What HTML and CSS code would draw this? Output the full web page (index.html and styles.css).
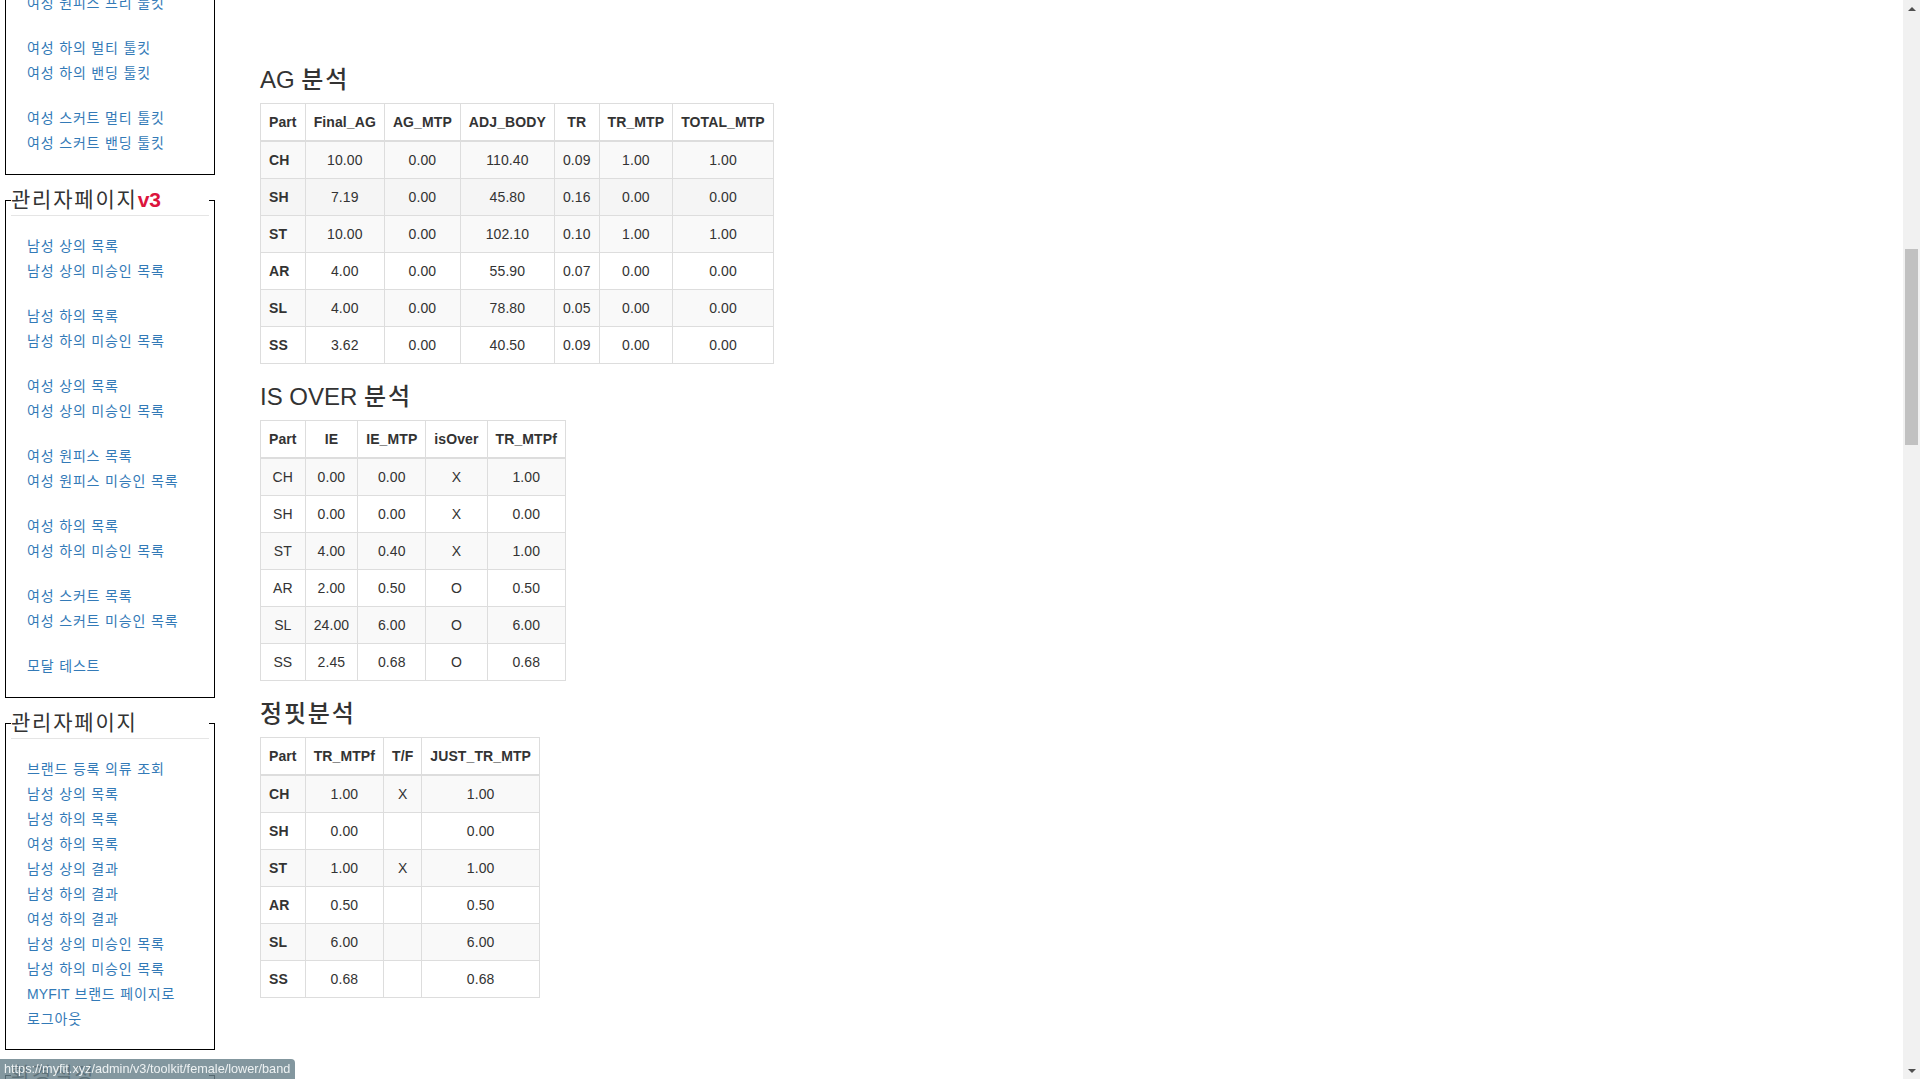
FILE: index.html
```html
<!DOCTYPE html>
<html lang="ko">
<head>
<meta charset="utf-8">
<title>MYFIT 관리자페이지</title>
<link rel="stylesheet" href="styles.css">
</head>
<body>
<div class="screen">
  <div class="viewport">
    <div class="layout">
      <aside class="sidebar">
        <fieldset class="menu menu-first">
          <legend>관리자페이지 툴킷</legend>
          <div class="group"><a href="#">남성 상의 툴킷</a></div>
          <div class="group"><a href="#">남성 하의 멀티 툴킷</a><a href="#">남성 하의 밴딩 툴킷</a></div>
          <div class="group"><a href="#">여성 상의 툴킷</a></div>
          <div class="group"><a href="#">여성 원피스 멀티 툴킷</a><a href="#">여성 원피스 프리 툴킷</a></div>
          <div class="group"><a href="#">여성 하의 멀티 툴킷</a><a href="#">여성 하의 밴딩 툴킷</a></div>
          <div class="group"><a href="#">여성 스커트 멀티 툴킷</a><a href="#">여성 스커트 밴딩 툴킷</a></div>
        </fieldset>
        <fieldset class="menu">
          <legend>관리자페이지<span class="ver">v3</span></legend>
          <div class="group"><a href="#">남성 상의 목록</a><a href="#">남성 상의 미승인 목록</a></div>
          <div class="group"><a href="#">남성 하의 목록</a><a href="#">남성 하의 미승인 목록</a></div>
          <div class="group"><a href="#">여성 상의 목록</a><a href="#">여성 상의 미승인 목록</a></div>
          <div class="group"><a href="#">여성 원피스 목록</a><a href="#">여성 원피스 미승인 목록</a></div>
          <div class="group"><a href="#">여성 하의 목록</a><a href="#">여성 하의 미승인 목록</a></div>
          <div class="group"><a href="#">여성 스커트 목록</a><a href="#">여성 스커트 미승인 목록</a></div>
          <div class="group"><a href="#">모달 테스트</a></div>
        </fieldset>
        <fieldset class="menu">
          <legend>관리자페이지</legend>
          <div class="group">
            <a href="#">브랜드 등록 의류 조회</a>
            <a href="#">남성 상의 목록</a>
            <a href="#">남성 하의 목록</a>
            <a href="#">여성 하의 목록</a>
            <a href="#">남성 상의 결과</a>
            <a href="#">남성 하의 결과</a>
            <a href="#">여성 하의 결과</a>
            <a href="#">남성 상의 미승인 목록</a>
            <a href="#">남성 하의 미승인 목록</a>
            <a href="#"><span class="latin">MYFIT</span> 브랜드 페이지로</a>
            <a href="#">로그아웃</a>
          </div>
        </fieldset>
        <fieldset class="menu">
          <legend>환경설정</legend>
          <div class="group"><a href="#">비밀번호 변경</a></div>
        </fieldset>
      </aside>

      <main class="main">
        <h3>AG <span class="ko">분석</span></h3>
        <table class="data-table">
          <thead>
            <tr><th>Part</th><th>Final_AG</th><th>AG_MTP</th><th>ADJ_BODY</th><th>TR</th><th>TR_MTP</th><th>TOTAL_MTP</th></tr>
          </thead>
          <tbody>
            <tr><th>CH</th><td>10.00</td><td>0.00</td><td>110.40</td><td>0.09</td><td>1.00</td><td>1.00</td></tr>
            <tr class="row-hover"><th>SH</th><td>7.19</td><td>0.00</td><td>45.80</td><td>0.16</td><td>0.00</td><td>0.00</td></tr>
            <tr><th>ST</th><td>10.00</td><td>0.00</td><td>102.10</td><td>0.10</td><td>1.00</td><td>1.00</td></tr>
            <tr><th>AR</th><td>4.00</td><td>0.00</td><td>55.90</td><td>0.07</td><td>0.00</td><td>0.00</td></tr>
            <tr><th>SL</th><td>4.00</td><td>0.00</td><td>78.80</td><td>0.05</td><td>0.00</td><td>0.00</td></tr>
            <tr><th>SS</th><td>3.62</td><td>0.00</td><td>40.50</td><td>0.09</td><td>0.00</td><td>0.00</td></tr>
          </tbody>
        </table>

        <h3>IS OVER <span class="ko">분석</span></h3>
        <table class="data-table">
          <thead>
            <tr><th>Part</th><th>IE</th><th>IE_MTP</th><th>isOver</th><th>TR_MTPf</th></tr>
          </thead>
          <tbody>
            <tr><td>CH</td><td>0.00</td><td>0.00</td><td>X</td><td>1.00</td></tr>
            <tr><td>SH</td><td>0.00</td><td>0.00</td><td>X</td><td>0.00</td></tr>
            <tr><td>ST</td><td>4.00</td><td>0.40</td><td>X</td><td>1.00</td></tr>
            <tr><td>AR</td><td>2.00</td><td>0.50</td><td>O</td><td>0.50</td></tr>
            <tr><td>SL</td><td>24.00</td><td>6.00</td><td>O</td><td>6.00</td></tr>
            <tr><td>SS</td><td>2.45</td><td>0.68</td><td>O</td><td>0.68</td></tr>
          </tbody>
        </table>

        <h3><span class="ko">정핏분석</span></h3>
        <table class="data-table">
          <thead>
            <tr><th>Part</th><th>TR_MTPf</th><th>T/F</th><th>JUST_TR_MTP</th></tr>
          </thead>
          <tbody>
            <tr><th>CH</th><td>1.00</td><td>X</td><td>1.00</td></tr>
            <tr><th>SH</th><td>0.00</td><td></td><td>0.00</td></tr>
            <tr><th>ST</th><td>1.00</td><td>X</td><td>1.00</td></tr>
            <tr><th>AR</th><td>0.50</td><td></td><td>0.50</td></tr>
            <tr><th>SL</th><td>6.00</td><td></td><td>6.00</td></tr>
            <tr><th>SS</th><td>0.68</td><td></td><td>0.68</td></tr>
          </tbody>
        </table>
      </main>
    </div>
  </div>

  <div class="scrollbar">
    <div class="sb-button"><span class="sb-arrow-up"></span></div>
    <div class="sb-track"><div class="sb-thumb" style="margin-top:232px;height:196px"></div></div>
    <div class="sb-button"><span class="sb-arrow-down"></span></div>
  </div>
</div>

<div class="status-bubble">https://myfit.xyz/admin/v3/toolkit/female/lower/band</div>
</body>
</html>
```

FILE: styles.css
```css
* {
  box-sizing: border-box;
}

html,
body {
  margin: 0;
  padding: 0;
}

body {
  font-family: "Liberation Sans", "Noto Sans CJK KR", Arial, sans-serif;
  font-size: 14px;
  line-height: 20px;
  color: #333;
  background: #fff;
  overflow: hidden;
}

.screen {
  display: flex;
  height: 1079px;
}

.viewport {
  flex: 1;
  height: 1079px;
  overflow: hidden;
}

.layout {
  display: flex;
  align-items: flex-start;
}

/* ---------- sidebar ---------- */
.sidebar {
  flex: none;
  width: 215px;
  padding-left: 5px;
}

.menu {
  width: 210px;
  min-width: 0;
  margin: 0 0 10px;
  padding: 0 5px 16px;
  border: 1px solid #000;
}

.menu:nth-child(3) {
  padding-bottom: 15px;
}

/* the page is scrolled: the first menu starts above the window */
.menu-first {
  margin-top: -243px;
}

.menu legend {
  display: block;
  width: 100%;
  height: 31px;
  padding: 0;
  margin: 0 0 20px;
  font-size: 21px;
  line-height: 30px;
  letter-spacing: 0.085em;
  color: #333;
  border: 0;
  border-bottom: 1px solid #e5e5e5;
  white-space: nowrap;
}

.ver {
  color: #dc143c;
  font-weight: bold;
  letter-spacing: 0;
}

.group + .group {
  margin-top: 20px;
}

.group a {
  display: block;
  height: 25px;
  padding: 0 0 5px 16px;
  line-height: 20px;
  letter-spacing: 0.06em;
  color: #337ab7;
  text-decoration: none;
  white-space: nowrap;
}

.group a .latin {
  letter-spacing: 0.01em;
}

/* ---------- main ---------- */
.main {
  flex: 1;
  padding: 47px 0 0 45px;
}

.main h3 {
  margin: 20px 0 10px;
  font-size: 24px;
  font-weight: 500;
  line-height: 26px;
  height: 26px;
  color: #333;
}

.main h3 .ko {
  letter-spacing: 0.075em;
  line-height: 20px;
}

.data-table {
  border-collapse: collapse;
  border-spacing: 0;
  border: 1px solid #ddd;
  margin-bottom: 20px;
  background: transparent;
}

.data-table th,
.data-table td {
  padding: 8px;
  line-height: 20px;
  letter-spacing: 0.1px;
  border: 1px solid #ddd;
  vertical-align: top;
}

.data-table thead th {
  border-bottom-width: 2px;
  vertical-align: bottom;
  text-align: center;
  font-weight: bold;
}

.data-table tbody th {
  text-align: left;
  font-weight: bold;
}

.data-table tbody td {
  text-align: center;
}

.data-table tbody tr:nth-child(odd) {
  background: #f9f9f9;
}

.data-table tbody tr.row-hover {
  background: #f5f5f5;
}

/* ---------- fake scrollbar ---------- */
.scrollbar {
  flex: none;
  width: 17px;
  height: 1079px;
  background: #f1f1f1;
  display: flex;
  flex-direction: column;
}

.sb-button {
  flex: none;
  height: 17px;
  display: flex;
  align-items: center;
  justify-content: center;
}

.sb-arrow-up {
  width: 0;
  height: 0;
  border-left: 4px solid transparent;
  border-right: 4px solid transparent;
  border-bottom: 4px solid #505050;
}

.sb-arrow-down {
  width: 0;
  height: 0;
  border-left: 4px solid transparent;
  border-right: 4px solid transparent;
  border-top: 4px solid #505050;
}

.sb-track {
  flex: 1;
  padding: 0 2px;
}

.sb-thumb {
  width: 100%;
  background: #c1c1c1;
}

/* ---------- status bubble (overlay) ---------- */
.status-bubble {
  position: fixed;
  left: 0;
  bottom: 0;
  height: 20px;
  padding: 0 5px 0 4px;
  font-family: "Liberation Sans", Arial, sans-serif;
  font-size: 12.7px;
  line-height: 20px;
  color: #eef2f3;
  background: rgba(104, 128, 138, 0.82);
  border-top-right-radius: 4px;
  white-space: nowrap;
}
```
